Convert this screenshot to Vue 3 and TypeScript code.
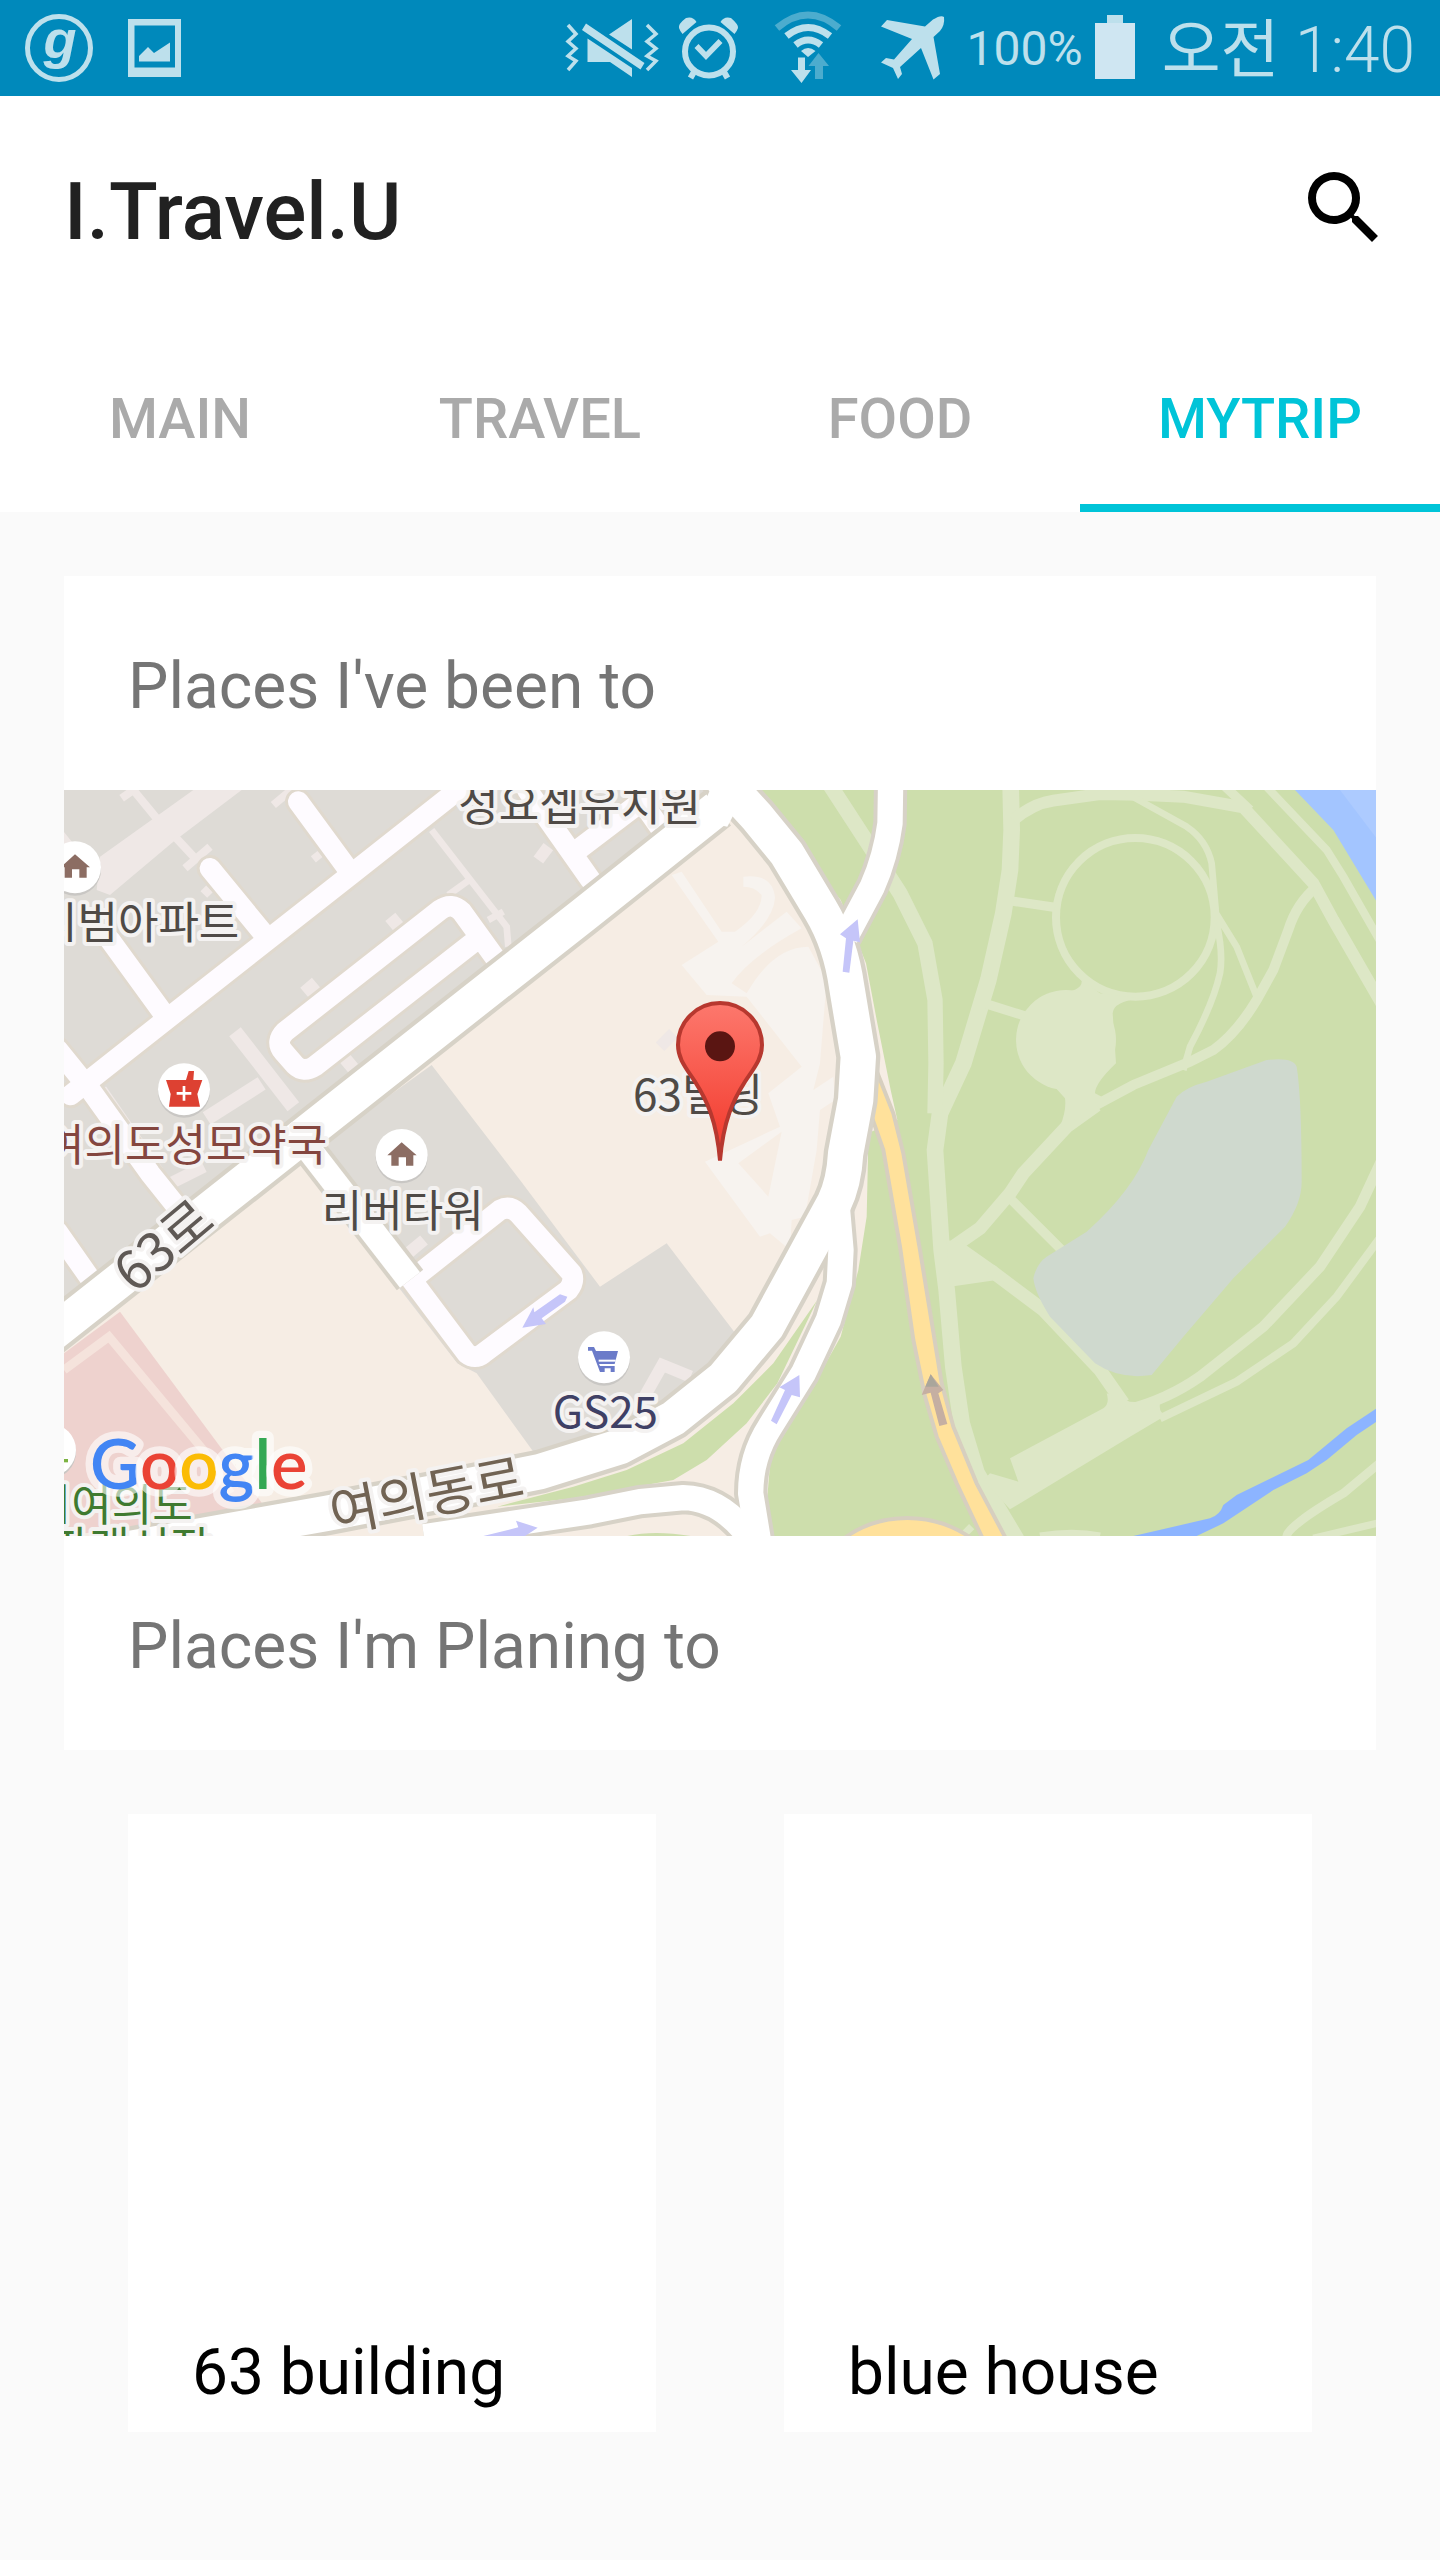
<script setup lang="ts">
import { ref } from 'vue'

interface Place {
  id: number
  name: string
}

const tabs: string[] = ['MAIN', 'TRAVEL', 'FOOD', 'MYTRIP']
const activeTab = ref<string>('MYTRIP')

const plannedPlaces: Place[] = [
  { id: 1, name: '63 building' },
  { id: 2, name: 'blue house' },
]
</script>

<template>
  <div class="screen">
    <div class="status">
      <svg class="glyph" width="68" height="96" viewBox="25 0 68 96" aria-hidden="true">
        <circle cx="59" cy="48" r="31.500" fill="none" stroke="currentColor" stroke-width="5" />
        <text class="brand" x="60" y="58" text-anchor="middle">g</text>
      </svg>
      <svg class="glyph" width="53" height="96" viewBox="128 0 53 96" aria-hidden="true">
        <path fill="currentColor" fill-rule="evenodd" d="M128 19H181V77H128ZM134.500 25.500V67.500H175V25.500Z" />
        <path fill="currentColor" d="M139 56L148 47L154 53L170 42.500V61.500H139Z" />
      </svg>
      <div class="system">
        <svg class="glyph" width="104" height="96" viewBox="560 0 104 96" aria-hidden="true">
          <g fill="none" stroke="currentColor" stroke-width="3.500">
            <path d="M569 25L577 34L569 41.500L577 48.500L569 56L577 61L569 70" />
            <path d="M648 25L657 34L648 41.500L657 48.500L648 56L657 61L648 70" />
          </g>
          <path fill="currentColor" d="M633 19V49.500L610 34.500ZM588.500 38.500L633 68V77L611 62H588.500ZM587 23.500L645.500 63L641.500 69.500L583 30Z" />
        </svg>
        <svg class="glyph" width="96" height="96" viewBox="664 0 96 96" aria-hidden="true">
          <g fill="none" stroke="currentColor">
            <circle cx="710" cy="51.500" r="24" stroke-width="6" />
            <path stroke-width="5.500" d="M697.500 46L707 56L721.500 41" />
            <path stroke-width="6" d="M695.500 71L691.500 78M724.500 71L728.500 78" />
          </g>
          <path fill="currentColor" d="M683.500 34L697.500 22Q694 16 687 18Q679 24 680 28Q681 31 683.500 34ZM735.500 34L721.500 22Q725 16 732 18Q740 25 739 28Q738 31 735.500 34Z" />
        </svg>
        <svg class="glyph" width="100" height="96" viewBox="760 0 100 96" aria-hidden="true">
          <g fill="none" stroke="currentColor">
            <path stroke-width="7" opacity=".4" d="M778 28Q809 2 840 28" />
            <path stroke-width="7" d="M787.500 36Q809 19 831 36" />
            <path stroke-width="7" d="M796.500 45Q809 35 822 45" />
          </g>
          <path fill="currentColor" d="M802 51Q809 45 816.500 51L809 57ZM799 57.500H806V70H812L802.500 83L792 70H799Z" />
          <path fill="currentColor" opacity=".4" d="M819.500 53L830 66H824V79H816V66H809.500Z" />
        </svg>
        <svg class="glyph" width="104" height="96" viewBox="860 0 104 96" aria-hidden="true">
          <path fill="currentColor" d="M888 20L926 26.500L934 19.500Q942 14.500 945 17Q946 25 941 31L934.500 37L941 74L934.500 79.500L922 48L901 67L903 74L899 79L894 68L882 62.500L887 58L895 59.500L913 39L882 26.500Z" />
        </svg>
        <span class="percent">100%</span>
        <svg class="glyph" width="40" height="96" viewBox="1097 0 40 96" aria-hidden="true">
          <path fill="#cfe6f2" d="M1097 23H1137V79H1097Z" />
          <path fill="currentColor" d="M1109 15H1125V23H1109Z" />
        </svg>
        <span class="clock"><span class="meridiem">오전</span> 1:40</span>
      </div>
    </div>

    <header class="header">
      <div class="toolbar">
        <h1 class="title">I.Travel.U</h1>
        <button class="search" type="button" aria-label="Search">
          <svg viewBox="0 0 24 24" aria-hidden="true">
            <path d="M15.500 14h-.790l-.280-.270A6.471 6.471 0 0 0 16 9.500 6.500 6.500 0 1 0 9.500 16c1.610 0 3.090-.590 4.230-1.570l.270.280v.790l5 4.990L20.490 19l-4.990-5zm-6 0C7.010 14 5 11.990 5 9.500S7.010 5 9.500 5 14 7.010 14 9.500 11.990 14 9.500 14z" />
          </svg>
        </button>
      </div>
      <nav class="tabs">
        <button
          v-for="tab in tabs"
          :key="tab"
          type="button"
          class="tab"
          :class="{ active: tab === activeTab }"
          @click="activeTab = tab"
        >{{ tab }}</button>
      </nav>
    </header>

    <main class="content">
      <section class="trips">
        <h2 class="heading">Places I've been to</h2>
        <svg class="map" viewBox="0 0 3936 2238" role="img" aria-label="Map of 63 building">
          <defs>
            <linearGradient id="pin" x1="0" y1="0" x2="0" y2="1">
              <stop offset="0" stop-color="#fd786d" />
              <stop offset=".8" stop-color="#f44336" />
            </linearGradient>
          </defs>
          <rect width="3936" height="2238" fill="#f6ede4" />

          <!-- city blocks -->
          <g fill="#dedbd6">
            <path d="M0 0H1990L0 1600Z" />
            <path d="M1103 825L1368 1170L1608 1490L1808 1360L2018 1635L1900 1800L1640 1950L1408 1985L1238 1750L1180 1720L708 1110Z" />
          </g>
          <path fill="#eed2ce" d="M0 1690L168 1565L598 2145L368 2190L0 2238Z" />
          <path fill="none" stroke="#f5e3dc" stroke-width="26" d="M0 1740L135 1640L418 1980L500 2110" />

          <!-- footpaths between the blocks -->
          <g transform="translate(-12 -30)" fill="none" stroke="#efe8e6">
            <path stroke="none" fill="#efe8e6" d="M120 230L400 30H545L340 185L150 345L110 330Z" />
            <path stroke-width="24" d="M185 55L220 30L290 115M345 170L410 240M375 265L450 200M640 75L700 25M760 238L780 222M430 325L450 345M0 160L40 210" />
            <path stroke-width="44" d="M525 755L700 980M605 910L440 1015M735 640L770 610M990 440L1020 415M850 860L880 835" />
            <path stroke-width="20" d="M1115 150L1340 440L1345 500M1165 345L1235 295M1285 420L1330 395M130 925L300 1170" />
            <path stroke-width="36" d="M1435 240L1465 200M1800 800L1840 760" />
          </g>
          <path fill="none" stroke="#efe8e6" stroke-width="36" d="M1730 1840L1795 1725L1880 1760M1020 1400L1080 1350M300 1190L420 1130" />

          <!-- outlines of the tower -->
          <g transform="translate(1128 -30)">
            <path fill="#f7f3ef" d="M695 285L725 275L845 455H885Q965 400 965 345Q945 320 910 320V290Q1000 280 1005 355Q1000 420 905 500L1040 395L1085 445Q930 530 875 610L920 640Q1000 500 1105 500L1160 600L1140 850L1120 930L1180 890L1185 960L1140 990L1130 1110L1095 1310L1055 1320L1050 1410L990 1360L960 1370L795 1145L1020 1040L985 940L1085 860L920 650L800 645L725 555L835 485Z" />
            <path fill="#f6ede4" d="M895 1150L1025 1055L985 1250Z" />
          </g>

          <!-- riverside park -->
          <g fill="#cddeac">
            <path d="M2060 -10L2200 170L2330 330L2406 520L2440 700L2480 900L2500 990L2412 1030V1100L2408 1280L2383 1440L2330 1640L2240 1800L2120 2000L2100 2240H3940V-10Z" />
            <path d="M2260 1530L2128 1720L2008 1840L1858 1960L1688 2040L1528 2090L1300 2150L1528 2125L1828 2070L1928 2010L2048 1900L2140 1780Z" />
            <path d="M1690 2238Q1770 2220 1880 2238Z" />
          </g>
          <g transform="translate(2508 -30)" fill="none" stroke="#dde7c6">
            <path stroke-width="50" d="M332 20L335 150L330 270L310 400L265 600L190 850L120 1000L105 1110L125 1410L140 1530L160 1760L185 1930L230 2080L350 2280" />
            <path stroke-width="46" d="M-220 0L-90 200L0 340L75 490L105 660L108 850L105 1000" />
            <path stroke-width="36" d="M340 120Q400 70 460 62L600 42L720 44L850 50L1030 82L1240 310L1300 420L1450 680" />
            <path stroke-width="28" d="M965 10L1050 90" />
            <path stroke-width="24" d="M1090 10L1280 210L1330 290L1450 500" />
            <circle cx="706" cy="412" r="238" stroke-width="24" />
            <path stroke-width="20" d="M680 40L860 140Q920 180 935 250L948 400L1010 500L1070 650M950 430Q970 520 960 580Q940 670 870 800L850 870" />
            <path stroke-width="30" d="M1250 320Q1190 370 1165 450L1120 570L1070 660Q1010 760 940 810L870 845L700 915L560 990" />
            <path stroke-width="40" d="M590 975L500 1040L370 1180L330 1240L240 1345L160 1400" />
            <path stroke-width="28" d="M335 363L465 382M260 672L375 708M335 1260L490 1415" />
            <g fill="#dde7c6" stroke="none">
              <circle cx="498" cy="780" r="150" />
              <path d="M470 640Q550 635 545 600L600 640L720 655Q640 665 638 700L648 850Q585 910 585 940L605 950L510 1030L480 1040Q500 990 495 955L400 850V700Z" />
              <path d="M140 1380L190 1390L290 1460L350 1530L290 1500L150 1520Z" />
              <path d="M330 2035L610 1885Q630 1870 620 1840L690 1865L780 1870Q775 1900 800 1905L690 1970L330 2188L250 2100L270 2080L355 2105Z" />
            </g>
            <path stroke-width="40" d="M270 1470L430 1590L600 1770L670 1870" />
            <path stroke-width="32" d="M680 1890Q800 1860 900 1790L1090 1640L1260 1460L1380 1280L1450 1130" />
            <path stroke-width="24" d="M780 1915L1010 1805L1180 1690L1310 1550L1450 1360" />
            <path stroke-width="26" d="M1160 2270Q1160 2240 1330 2140L1450 2040" />
            <path stroke-width="22" d="M1240 2275L1450 2225M420 2268Q520 2252 600 2268M190 2265L215 2240" />
            <path stroke="none" fill="#cfd9ce" d="M830 950Q860 920 920 905L1100 840Q1180 830 1190 860Q1205 950 1205 1205Q1205 1270 1155 1340L1000 1495L850 1670L755 1785Q660 1800 585 1750L450 1610Q405 1540 400 1495Q410 1450 440 1430L560 1355Q700 1230 745 1110Z" />
            <path stroke="none" fill="#a3c5ff" d="M1185 30L1300 150L1430 365V30Z" />
            <path stroke="none" fill="#adcbff" d="M1320 30L1430 175V30Z" />
            <path stroke="none" fill="#8cb4ff" d="M700 2268L930 2215Q960 2205 970 2175L1010 2145L1225 2040L1340 1945L1430 1885V1925L1370 1965L1280 2040L1220 2080L1120 2130L970 2230L890 2268Z" />
          </g>

          <!-- expressway -->
          <g fill="#ffe19b" stroke="#d7cfbf" stroke-width="12">
            <path d="M2433 830L2488 970L2518 1090L2568 1380L2633 1780L2668 1910L2738 2080L2828 2250H2758L2678 2080L2618 1940L2583 1820L2548 1650L2508 1370L2458 1080L2423 980Z" />
            <path d="M2340 2245Q2420 2185 2530 2184Q2640 2184 2730 2250Z" />
          </g>

          <!-- back streets, outline first -->
          <g v-for="pass in 2" :key="`street-${pass}`" class="streets" :class="pass === 1 ? 'edge' : 'fill'">
            <path d="M20 915L318 680L868 248L1220 -30" />
            <path d="M-20 778L83 905L258 1150L370 1290M-20 1325L85 1475" />
            <path d="M703 35L850 235M438 235L598 430M138 450L298 670" />
            <path d="M1298 510L1193 365Q1163 335 1128 360L663 725Q633 755 658 785L693 825Q718 850 753 828L1243 445" />
            <path d="M1390 0L1580 270M1528 190L1830 -40M1730 30L1800 130" />
            <path d="M1048 1465L1308 1260Q1338 1245 1363 1270L1523 1450Q1533 1475 1513 1500L1258 1690Q1233 1710 1208 1690L1028 1450" />
          </g>
          <!-- main roads, outline first -->
          <g v-for="pass in 2" :key="`road-${pass}`" class="roads" :class="pass === 1 ? 'edge' : 'fill'">
            <path class="lane" d="M690 1020L1038 1470" />
            <path class="lane" d="M2480 -30L2478 100Q2465 200 2425 290L2345 440" />
            <path class="lane" d="M2318 1230L2331 1380L2326 1480L2293 1590L2218 1750L2118 1910Q2060 2000 2060 2110L2083 2250" />
            <path class="lane" d="M1080 2240L1578 2165L1728 2135L1858 2123Q1960 2125 2040 2220L2080 2290" />
            <path d="M-60 1650L1278 595L1558 375L1960 55" />
            <path d="M1950 -60L2078 80L2168 190L2270 360Q2330 460 2348 590L2383 800L2375 930L2345 1090Q2340 1180 2310 1240L2228 1390L2108 1610L1978 1765L1828 1885L1668 1970L1428 2045L1100 2110L788 2170L200 2275" />
          </g>
          <path fill="#fff" d="M1940 -5H2050L1990 110L1900 90Z" />

          <!-- travel direction arrows -->
          <g fill="#c5c5f9">
            <path d="M2381 388L2388 457L2368 452L2356 548L2336 545L2346 445L2328 433Z" />
            <path d="M1375 1613L1408 1552L1411 1567L1488 1513L1510 1520L1503 1535L1433 1585L1446 1602Z" />
            <path d="M2206 1755L2146 1792L2163 1800L2121 1892L2138 1903L2183 1815L2208 1822Z" />
            <path d="M1421 2213L1356 2192L1363 2212L1250 2240H1380Z" />
          </g>
          <path fill="#c5afa2" d="M2600 1753L2573 1815L2600 1808L2626 1908L2650 1902L2623 1810L2638 1800Z" />
          <path fill="#aaa69b" d="M2600 1753L2584 1790H2624Z" />

          <!-- points of interest -->
          <g fill="#c9c7c4">
            <circle cx="33" cy="239" r="78" />
            <circle cx="360" cy="905" r="78" />
            <circle cx="1013" cy="1102" r="78" />
            <circle cx="1620" cy="1709" r="78" />
            <circle cx="-42" cy="1987" r="78" />
          </g>
          <g fill="#fff">
            <circle cx="33" cy="232" r="78" />
            <circle cx="360" cy="898" r="78" />
            <circle cx="1013" cy="1095" r="78" />
            <circle cx="1620" cy="1702" r="78" />
            <circle cx="-42" cy="1980" r="78" />
          </g>
          <g fill="#8c6d63">
            <path d="M33 193L78 232H68V263H46V238H24V263H2V232H-10Z" />
            <path d="M1013 1057L1058 1096H1048V1127H1026V1102H1004V1127H982V1096H970Z" />
          </g>
          <path fill="#dd4132" d="M306 870H366L374 843H390L388 870H415L400 912L408 950H315L320 912Z" />
          <path fill="none" stroke="#fff" stroke-width="8" d="M360 888V932M338 910H382" />
          <path fill="#6b7bc9" d="M1572 1671H1590L1596 1683H1662L1652 1722H1605L1608 1728H1652V1746H1640V1735H1622V1746H1608L1584 1682H1572Z" />
          <path stroke="#fff" stroke-width="6" d="M1604 1712H1655" />
          <path stroke="#7cb342" stroke-width="10" d="M0 2012H12" />

          <g class="labels">
            <text x="526" y="448" text-anchor="end">시범아파트</text>
            <text x="1547" y="92" text-anchor="middle">성요셉유치원</text>
            <text x="1902" y="964" text-anchor="middle">63빌딩</text>
            <text x="1016" y="1311" text-anchor="middle">리버타워</text>
            <text class="pharmacy" x="790" y="1113" text-anchor="end">여의도성모약국</text>
            <text class="store" x="1624" y="1915" text-anchor="middle">GS25</text>
            <text class="park" x="386" y="2192" text-anchor="end">시여의도</text>
            <text class="park" x="440" y="2322" text-anchor="end">파래시장</text>
            <text class="street" text-anchor="middle" transform="translate(336 1410) rotate(-40)">63로</text>
            <text class="avenue" text-anchor="middle" transform="translate(1098 2172) rotate(-11)">여의동로</text>
          </g>
          <text class="logo" x="78" y="2098"><tspan fill="#4285f4">G</tspan><tspan fill="#ea4335">o</tspan><tspan fill="#fbbc05">o</tspan><tspan fill="#4285f4">g</tspan><tspan fill="#34a853">l</tspan><tspan fill="#ea4335">e</tspan></text>

          <!-- place marker -->
          <path fill="url(#pin)" stroke="#b7382f" stroke-width="12" d="M1968 1112C1958 990 1928 930 1893 875C1863 830 1842 805 1842 765A126 126 0 0 1 2094 765C2094 805 2073 830 2043 875C2008 930 1978 990 1968 1112Z" />
          <circle cx="1968" cy="769" r="45" fill="#5a1512" />
        </svg>
        <h2 class="heading">Places I'm Planing to</h2>
      </section>

      <section class="planned">
        <article v-for="place in plannedPlaces" :key="place.id" class="place">
          <h3 class="place-name">{{ place.name }}</h3>
        </article>
      </section>
    </main>
  </div>
</template>

<style>
body {
  margin: 0;
  background: #fafafa;
}
</style>

<style scoped>
.screen {
  min-height: 100vh;
  background: #fafafa;
  font-family: Roboto, "Noto Sans CJK KR", sans-serif;
}

.status {
  display: flex;
  align-items: center;
  height: 96px;
  padding: 0 25px;
  gap: 35px;
  background: #0089bb;
  color: #bde0ec;
}

.glyph {
  flex: none;
  display: block;
}

.brand {
  fill: currentColor;
  font: italic 700 54px "Liberation Sans", sans-serif;
}

.system {
  display: flex;
  align-items: center;
  margin-left: auto;
}

.percent {
  margin: 0 12px 0 4px;
  font-size: 48px;
  font-weight: 400;
}

.clock {
  margin-left: 27px;
  padding-top: 6px;
  font-size: 64px;
  line-height: 90px;
  font-weight: 300;
}

.meridiem {
  font-weight: 400;
}

.header {
  background: #fff;
}

.toolbar {
  display: flex;
  align-items: center;
  justify-content: space-between;
  height: 224px;
  padding: 0 48px 0 64px;
}

.title {
  margin: 0;
  padding-top: 8px;
  color: #212121;
  font-size: 80px;
  line-height: 96px;
  font-weight: 500;
}

.search {
  width: 96px;
  height: 96px;
  padding: 0;
  border: 0;
  background: none;
  cursor: pointer;
}

.search svg {
  display: block;
  width: 96px;
  height: 96px;
}

.tabs {
  display: flex;
  height: 192px;
}

.tab {
  flex: 1;
  padding: 14px 0 0;
  border: 0;
  border-bottom: 8px solid transparent;
  background: none;
  color: #aaa;
  font: inherit;
  font-size: 56px;
  font-weight: 500;
  cursor: pointer;
}

.tab.active {
  border-bottom-color: #00c4d8;
  color: #00c4d8;
}

.content {
  padding: 64px;
}

.trips {
  background: #fff;
}

.heading {
  margin: 0;
  padding: 68px 64px 60px;
  color: #757575;
  font-size: 64px;
  line-height: 86px;
  font-weight: 400;
}

.map {
  display: block;
  width: 100%;
  height: auto;
}

.streets,
.roads {
  fill: none;
  stroke-linejoin: round;
}

.streets {
  stroke-linecap: round;
}

.streets.edge {
  stroke: #e0d9ce;
  stroke-width: 80;
}

.streets.fill {
  stroke: #fefbff;
  stroke-width: 62;
}

.roads.edge {
  stroke: #d7d2c7;
  stroke-width: 132;
}

.roads.fill {
  stroke: #fff;
  stroke-width: 106;
}

.roads.edge .lane {
  stroke-width: 100;
}

.roads.fill .lane {
  stroke-width: 76;
}

.labels {
  fill: #4f4a46;
  stroke: #f4f2f1;
  stroke-width: 24;
  stroke-linejoin: round;
  paint-order: stroke;
  font-family: "Noto Sans CJK KR", sans-serif;
  font-size: 132px;
}

.pharmacy {
  fill: #84463f;
}

.store {
  fill: #3f4065;
}

.park {
  fill: #3f7a30;
}

.street {
  fill: #5f5955;
  font-size: 160px;
}

.avenue {
  fill: #716353;
  font-size: 160px;
}

.logo {
  stroke: rgba(255, 255, 255, 0.6);
  stroke-width: 44;
  stroke-linejoin: round;
  paint-order: stroke;
  font-family: Lato, sans-serif;
  font-size: 206px;
  font-weight: 600;
}

.planned {
  display: grid;
  grid-template-columns: 1fr 1fr;
  gap: 128px;
  padding: 64px;
}

.place {
  display: flex;
  align-items: flex-end;
  min-height: 618px;
  background: #fff;
}

.place-name {
  margin: 0;
  padding: 16px 64px;
  color: #000;
  font-size: 64px;
  line-height: 86px;
  font-weight: 400;
}
</style>
